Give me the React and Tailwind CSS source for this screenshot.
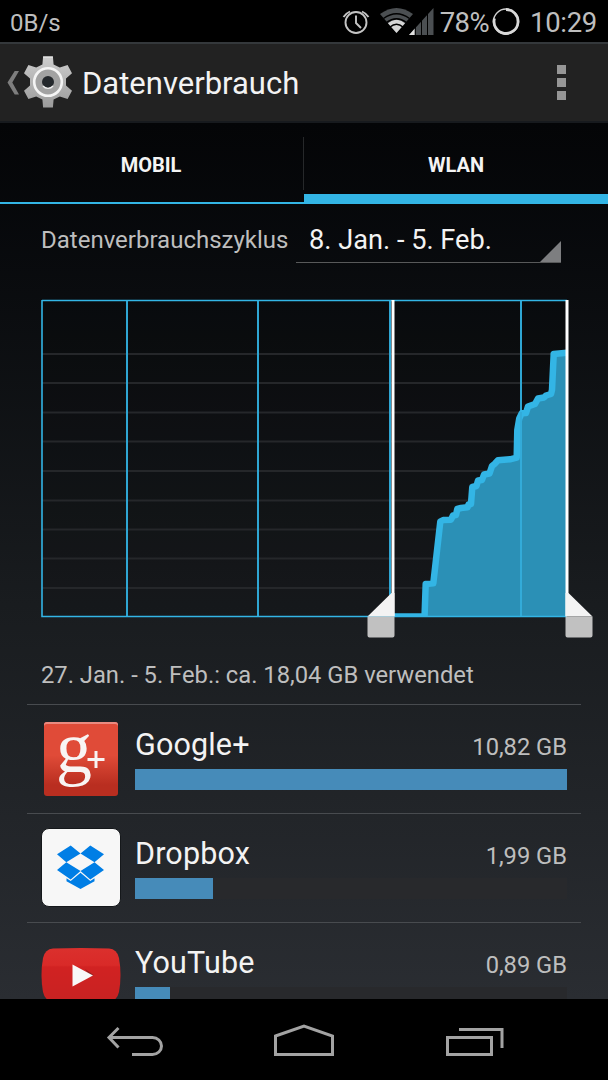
const GRID_ROWS = [354, 383, 412.5, 441.5, 471, 500.5, 529.5, 558.5, 588];
const WEEK_LINES = [127, 258, 390];
const USAGE =
  "424.5,618 425.7,584 433.3,583.3 440.3,521.7 443.3,520 451,519.7 453,515.500 456,515 457.3,509 461,508 467.500,507.3 468.500,504.500 471,504 472.3,487 476.500,486 478,480.500 482,480 484,474.500 489.500,473.500 492,466 494.500,464 498,460.3 510,459.3 516.7,457.7 517.3,430 519.3,418.3 521.7,413.3 526,413 528,406.500 535,404 538,398.500 544,397.500 546,395.500 551,394 552,390 553.7,354 567,352.7";

const APPS = [
  { name: "Google+", amount: "10,82 GB", share: 100, icon: <GooglePlusIcon /> },
  { name: "Dropbox", amount: "1,99 GB", share: 18.1, icon: <DropboxIcon /> },
  { name: "YouTube", amount: "0,89 GB", share: 8.1, icon: <YouTubeIcon /> },
];

function GooglePlusIcon() {
  return (
    <div className="relative ml-[3px] mt-[17px] h-[74px] w-[74px] rounded-[3px] bg-linear-to-b from-[#e04b38] from-45% to-[#b92e20] to-85% shadow-[inset_0_2px_0_#ea8a80]">
      <span
        className="absolute left-[12px] top-[-14px] text-[72px] leading-[80px] text-[#f8f4f3]"
        style={{ fontFamily: '"Liberation Serif", serif' }}
      >
        g
      </span>
      <svg className="absolute left-[43px] top-[28px]" width="18" height="18" viewBox="0 0 18 18">
        <path d="M9 1v17M.5 9.500H17.500" stroke="#f8f4f3" strokeWidth="3" />
      </svg>
    </div>
  );
}

function DropboxIcon() {
  return (
    <div className="mt-[14px] h-[79px] w-[80px] rounded-lg border border-[#15181b] bg-[#f7f7f7]">
      <svg width="77" height="77" viewBox="0 0 77 77" fill="#007ee5">
        <path d="M15 25.300 28.700 16.500 38.500 24.500 24.300 33.300ZM62 25.300 48.300 16.500 38.500 24.500 52.500 33.300ZM15 41 24.300 33.300 38.500 42 28.700 50.500ZM62 41 52.500 33.300 38.500 42 48.300 50.500Z" />
        <path d="M38.500 43.800 28.700 52 24.500 49.300V52.300L38.500 60 52.500 52.300V49.300L48.300 52Z" />
      </svg>
    </div>
  );
}

function YouTubeIcon() {
  return (
    <svg className="mt-[24px]" width="80" height="78" viewBox="0 0 80 78">
      <defs>
        <linearGradient id="yt" x1="0" y1="0" x2="0" y2="1">
          <stop offset="0" stopColor="#db302d" />
          <stop offset=".32" stopColor="#d92a28" />
          <stop offset=".35" stopColor="#d12222" />
          <stop offset="1" stopColor="#c82222" />
        </linearGradient>
      </defs>
      <path d="M12 1.500Q40 .3 68 1.500 76 2 78 11 81 28 78 45 76 54 68 54.500 40 56 12 54.500 4 54 2 45-1 28 2 11 4 2 12 1.500Z" fill="url(#yt)" />
      <path d="m44 22 8.500 6-3 2Z" fill="#8f2020" />
      <path d="M31.500 17.500V39.500L52 28.500Z" fill="#f8f8f8" />
    </svg>
  );
}

function StatusBar() {
  return (
    <header className="flex h-[42px] items-center bg-black pl-[10px] pr-[11px] pt-[2px] text-[#bebebe]">
      <span className="pt-px text-[24px]">0B/s</span>
      <svg className="ml-auto mb-[1px]" width="30" height="30" viewBox="0 0 30 30" fill="none" stroke="#c4c4c4" strokeWidth="1.900">
        <circle cx="15" cy="15.500" r="10.500" />
        <path d="M15 8.500v7.500l5 5M2.500 10Q4.500 6.500 9 4.500M27.500 10Q25.500 6.500 21 4.500" />
      </svg>
      <svg className="ml-[8px] mb-[1px]" width="56" height="30" viewBox="0 0 56 30">
        <path d="M17.500 26 1 7Q17.500-5 34 7Z" fill="#4b4f52" />
        <path d="M17.500 26 9 16.200Q17.500 9.500 26 16.200Z" fill="#d6d6d6" />
        <path d="M4.500 11.500Q17.500 2 30.500 11.500M7.500 15.500Q17.500 8 27.500 15.500M11 20Q17.500 14.500 24 20" fill="none" stroke="#000" strokeWidth="1.500" />
        <path d="M54.500 1V28H30Z" fill="#4b4f52" />
        <path d="M35.800 21.500V28H30Z" fill="#e0e0e0" />
        <path d="M36.300 15V28M42.500 10V28M48.500 4V28" stroke="#000" strokeWidth="1" />
      </svg>
      <span className="ml-[5px] pt-px text-[27.500px] tracking-[-0.600px]">78%</span>
      <svg className="ml-[3px] mb-[1px]" width="28" height="28" viewBox="0 0 28 28" fill="none">
        <circle cx="14" cy="13.500" r="12.500" stroke="#d0d0d0" strokeWidth="1.400" />
        <path d="M14 1.500A12 12 0 1 1 2.400 10.500" stroke="#d8d8d8" strokeWidth="2.800" />
      </svg>
      <span className="ml-[10px] pt-px text-[27.500px] tracking-[-0.300px]">10:29</span>
    </header>
  );
}

function ActionBar() {
  return (
    <div className="flex h-[81px] items-center border-y-[2px] border-t-[#34383b] border-b-[#171a1e] bg-[#222222] pl-[7px] pr-[42px]">
      <svg width="70" height="56" viewBox="0 0 70 56">
        <defs>
          <linearGradient id="gear" x1="0" y1="0" x2="0" y2="1">
            <stop offset="0" stopColor="#cdcdcd" />
            <stop offset="1" stopColor="#9b9b9b" />
          </linearGradient>
        </defs>
        <path d="M.5 27.500 7.700 16H12L5.300 27.500 12 39.500H7.700Z" fill="#7e7e7e" />
        <g transform="translate(41 27)">
          <path
            d="M-4.900-25.500H4.900L5.600-17.500 11.800-14.500 19.600-17 24-8.700 18-3.500V3.500L24 8.700 19.600 17 11.800 14.500 5.600 17.500 4.900 25.500H-4.900L-5.600 17.500-11.800 14.500-19.600 17-24 8.700-18 3.500V-3.500L-24-8.700-19.600-17-11.800-14.500-5.600-17.500Z"
            fill="url(#gear)"
          />
          <path d="M-4.900-25H4.900" stroke="#efefef" strokeWidth="1" />
          <circle r="13.800" fill="#a2a2a2" stroke="#f4f4f4" strokeWidth="2.600" />
          <circle r="6" fill="#24282c" />
          <path d="M-5 4A6.500 6.500 0 0 0 5 4" fill="none" stroke="#f0f0f0" strokeWidth="1.400" />
        </g>
      </svg>
      <h1 className="ml-[5px] mt-[4px] text-[31px] text-[#f3f3f3]">Datenverbrauch</h1>
      <div className="ml-auto flex flex-col gap-[4px]">
        <i className="size-[9px] bg-[#969696]" />
        <i className="size-[9px] bg-[#969696]" />
        <i className="size-[9px] bg-[#969696]" />
      </div>
    </div>
  );
}

function Tabs() {
  return (
    <nav className="flex h-[81px] shrink-0 text-[20px] font-bold text-[#f4f4f4]">
      <button className="flex w-[304px] items-center justify-center border-b-2 border-[#33b5e5] pr-[2px] pt-[4px]">MOBIL</button>
      <button className="flex flex-1 items-center justify-center border-b-[10px] border-[#33b5e5] pt-[12px]">WLAN</button>
    </nav>
  );
}

function UsageChart() {
  return (
    <svg className="block shrink-0" width="608" height="360" viewBox="0 290 608 360">
      <defs>
        <clipPath id="plot">
          <path d="M41 300H567V617H41Z" />
        </clipPath>
      </defs>
      <path d="M41 300H567V617H41Z" fill="#000" fillOpacity=".12" />
      {GRID_ROWS.map((y) => (
        <path key={y} d={`M42 ${y}H567`} stroke="#25272a" strokeWidth="2" />
      ))}
      {WEEK_LINES.map((x) => (
        <path key={x} d={`M${x} 300V616`} stroke="#2fa6d3" strokeWidth="2" />
      ))}
      <path d="M521 300V616" stroke="#2fa6d3" strokeWidth="2" />
      <g clipPath="url(#plot)">
        <polygon points={`${USAGE} 567,618`} fill="#2b90b6" />
        <polyline points={`394,616.500 424,616.500 ${USAGE}`} fill="none" stroke="#33b5e5" strokeWidth="6.500" strokeLinejoin="round" />
      </g>
      <path d="M521 412V616" stroke="#33abd9" strokeWidth="2" />
      <path d="M42 300.500H567M42 300V616.500H567" fill="none" stroke="#33b5e5" strokeWidth="1.600" />
      <path d="M393 300V616M567 300V616" stroke="#fff" strokeWidth="3" />
      <path d="M391.500 593H394.500V616.500H367.500ZM565.500 593H568.500L592.500 616.500H565.500Z" fill="#f3f3f3" />
      <path d="M367.500 616.500H394.500V635.500Q394.500 637.500 392.500 637.500H369.500Q367.500 637.500 367.500 635.500ZM565.500 616.500H592.500V635.500Q592.500 637.500 590.500 637.500H567.500Q565.500 637.500 565.500 635.500Z" fill="#c1c1c1" />
    </svg>
  );
}

function AppRow({ name, amount, share, icon }) {
  return (
    <li className="flex h-[109px] shrink-0 border-t border-[#484b4f] pl-[14px] pr-[14px]">
      <div className="w-[80px] shrink-0">{icon}</div>
      <div className="ml-[14px] flex-1">
        <div className="flex h-[64px] items-baseline justify-between pt-[21px]">
          <span className="text-[30.500px] leading-[38px] tracking-[0.150px] text-[#f3f3f3]">{name}</span>
          <span className="text-[23.700px] text-[#bebebe]">{amount}</span>
        </div>
        <div className="h-[21px] bg-[#28292c]">
          <div className="h-full bg-[#468bb9]" style={{ width: `${share}%` }} />
        </div>
      </div>
    </li>
  );
}

function NavBar() {
  return (
    <footer className="flex h-[81px] shrink-0 bg-black">
      <svg width="608" height="81" viewBox="0 999 608 81" fill="none" stroke="#a3a3a3" strokeWidth="3">
        <path d="M109 1037.500H152.500A9 8.500 0 0 1 152.500 1054.500H132M118.500 1028 109 1037.500 118.500 1047.500" />
        <path d="M275.500 1036 304 1026 332.500 1036V1054.500H275.500Z" />
        <path d="M447.500 1037.500H491.500V1054.500H447.500ZM459 1029.500H502V1048" />
      </svg>
    </footer>
  );
}

export default function App() {
  return (
    <div className="flex h-[1080px] w-[608px] flex-col overflow-hidden bg-black font-[Roboto,sans-serif]">
      <StatusBar />
      <ActionBar />
      <main className="relative flex min-h-0 flex-1 flex-col overflow-hidden bg-linear-to-b from-[#040507] via-[#191c1f] via-55% to-[#2a2d32]">
        <Tabs />
        <i className="absolute left-[303px] top-[14px] h-[53px] w-px bg-[#26282a]" />
        <div className="flex h-[86px] shrink-0 items-start pl-[41px]">
          <span className="w-[255px] pt-[18px] text-[24px] text-[#bebebe]">Datenverbrauchszyklus</span>
          <div className="relative h-[59px] w-[265px] border-b border-[#58595a] pl-[13px] pt-[16px] text-[27.200px] text-[#f3f3f3]">
            8. Jan. - 5. Feb.
            <svg className="absolute bottom-0 right-0" width="21" height="21" viewBox="0 0 21 21">
              <path d="M21 0V21H0Z" fill="#7d7e80" />
            </svg>
          </div>
        </div>
        <UsageChart />
        <p className="h-[54px] shrink-0 pl-[41px] pt-[8px] text-[23.750px] text-[#bebebe]">27. Jan. - 5. Feb.: ca. 18,04 GB verwendet</p>
        <ul className="mx-[27px] shrink-0">
          {APPS.map((app) => (
            <AppRow key={app.name} {...app} />
          ))}
        </ul>
      </main>
      <NavBar />
    </div>
  );
}
